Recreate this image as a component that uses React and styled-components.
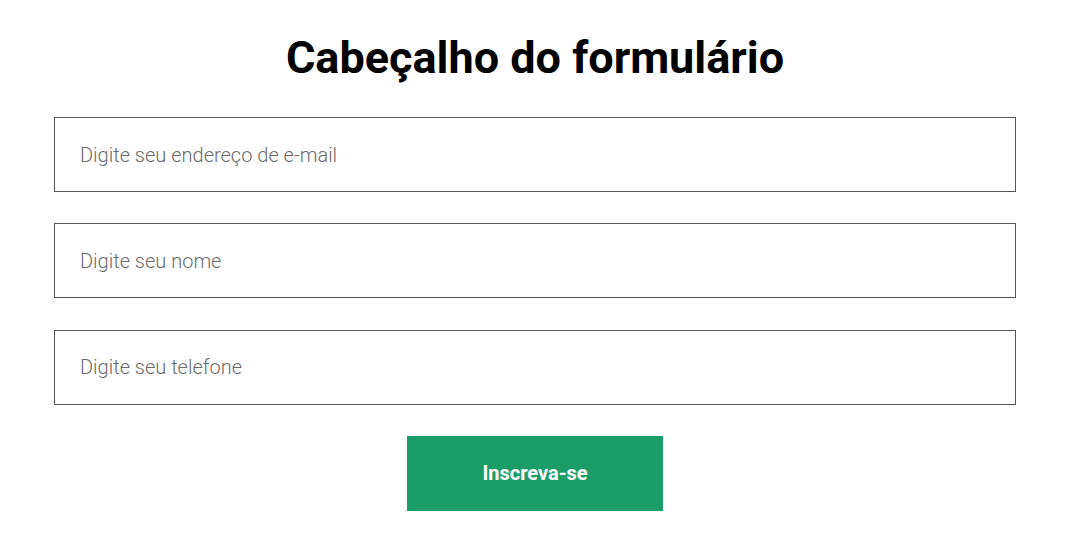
import styled, { createGlobalStyle } from 'styled-components';

const GlobalStyle = createGlobalStyle`
  * { box-sizing: border-box; }
  body {
    margin: 0;
    background: #fff;
    font-family: Roboto, "Liberation Sans", sans-serif;
  }
`;

const Form = styled.form`
  width: 962px;
  margin-left: 54px;
  padding-top: 30px;
  display: flex;
  flex-direction: column;
  align-items: center;
`;

const Title = styled.h1`
  margin: 0 0 31px;
  font-size: 45px;
  font-weight: 700;
  line-height: 56px;
  color: #000;
`;

const Fields = styled.div`
  width: 100%;
  display: flex;
  flex-direction: column;
  gap: 31.33px;
`;

const Input = styled.input`
  width: 100%;
  height: 75px;
  padding: 0 25px;
  border: 1px solid #555;
  border-radius: 0;
  font-family: Roboto, sans-serif;
  font-size: 20px;
  font-weight: 300;
  color: #333;
  outline: none;

  &::placeholder {
    color: #6b6b6b;
  }
`;

const Submit = styled.button`
  margin-top: 31.33px;
  width: 256px;
  height: 75px;
  border: none;
  background: #1a9d68;
  color: #fff;
  font-family: Roboto, sans-serif;
  font-size: 20px;
  font-weight: 700;
  cursor: pointer;
`;

export default function App() {
  return (
    <>
      <GlobalStyle />
      <Form onSubmit={(e) => e.preventDefault()}>
        <Title>Cabeçalho do formulário</Title>
        <Fields>
          <Input type="email" placeholder="Digite seu endereço de e-mail" />
          <Input type="text" placeholder="Digite seu nome" />
          <Input type="tel" placeholder="Digite seu telefone" />
        </Fields>
        <Submit type="submit">Inscreva-se</Submit>
      </Form>
    </>
  );
}
